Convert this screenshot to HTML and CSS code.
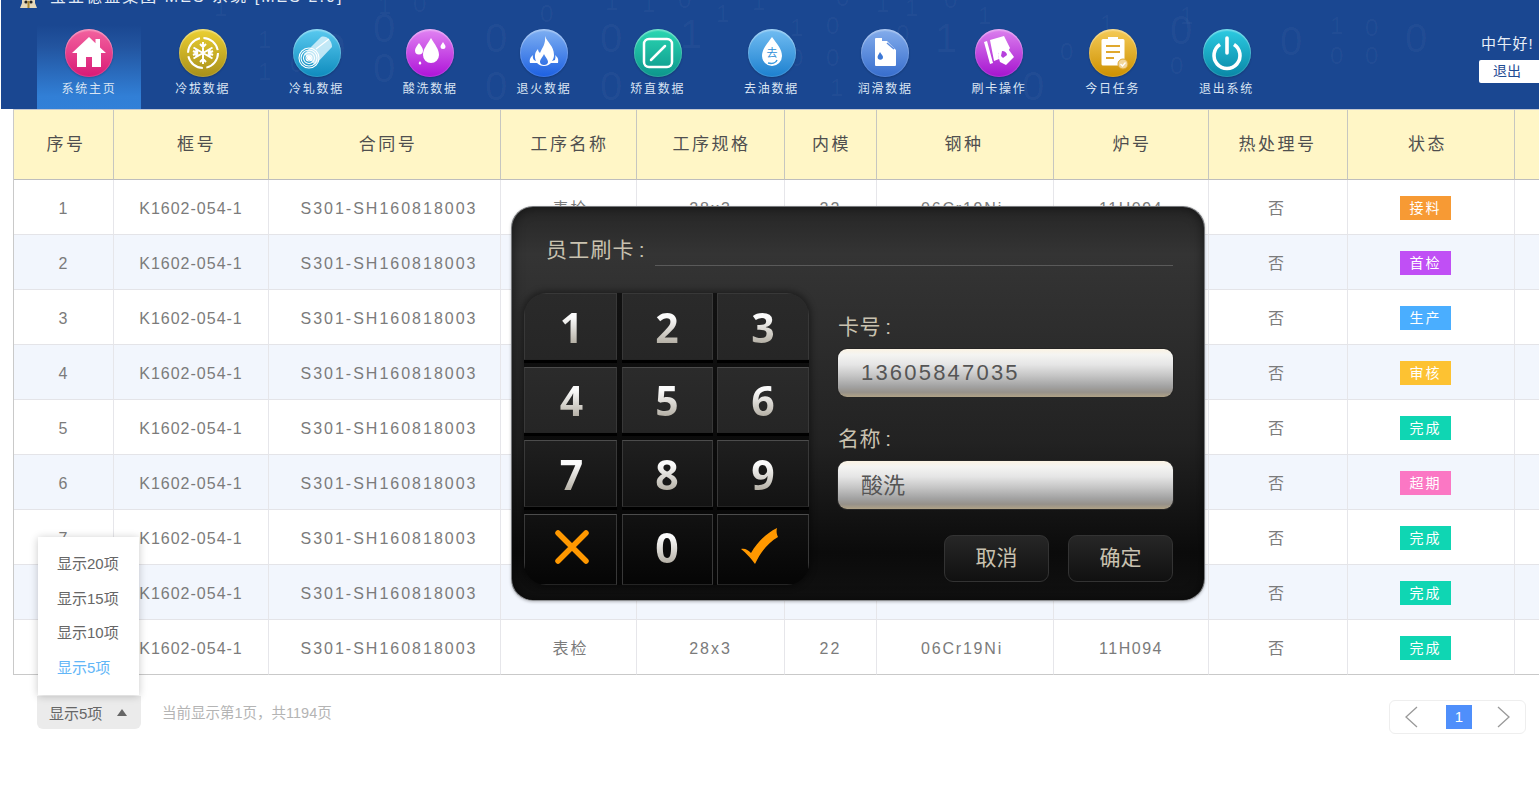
FILE: index.html
```html
<!DOCTYPE html>
<html lang="zh-CN">
<head>
<meta charset="utf-8">
<title>MES 系统</title>
<link rel="stylesheet" href="styles.css">
</head>
<body>
<div class="page">
  <header class="header">
    <svg class="binary" width="1539" height="109" aria-hidden="true">
      <g class="big">
        <text x="323" y="62">0</text><text x="373" y="42">0</text><text x="373" y="82">0</text><text x="485" y="100">0</text><text x="600" y="52">0</text><text x="600" y="100">0</text><text x="680" y="48">1</text><text x="935" y="52">1</text><text x="1022" y="100">0</text><text x="1170" y="44">0</text><text x="1280" y="55">0</text><text x="1405" y="52">0</text><text x="485" y="52">0</text>
      </g>
      <g class="mid">
        <text x="214" y="16">1</text><text x="258" y="48">1</text><text x="258" y="80">1</text><text x="290" y="72">0</text><text x="378" y="14">1</text><text x="413" y="12">0</text><text x="540" y="22">0</text><text x="605" y="10">1</text><text x="642" y="12">1</text><text x="678" y="8">0</text><text x="716" y="22">1</text><text x="752" y="10">1</text><text x="836" y="6">0</text><text x="876" y="12">1</text><text x="905" y="16">1</text><text x="944" y="8">0</text><text x="978" y="24">1</text><text x="790" y="36">1</text><text x="826" y="34">0</text><text x="790" y="66">0</text><text x="826" y="66">0</text><text x="830" y="96">1</text><text x="896" y="42">0</text><text x="1100" y="32">1</text><text x="1180" y="24">1</text><text x="1060" y="60">0</text><text x="1170" y="74">0</text><text x="1330" y="34">1</text><text x="1365" y="36">0</text><text x="1330" y="64">0</text><text x="1365" y="64">0</text>
      </g>
    </svg>
    <div class="titlebar">
      <svg class="logo" width="17" height="9" viewBox="0 0 17 9"><path d="M2 0h13v3l2 5H0l2-5z" fill="#e6d8b8"/><circle cx="6" cy="2" r="1.6" fill="#222"/><circle cx="11" cy="2" r="1.6" fill="#222"/><path d="M8.5 1v7" stroke="#a83" stroke-width="2"/></svg>
      <span class="apptitle">宝业德盛集团 MES 系统 [MES 2.0]</span>
    </div>
    <div class="navrow">
      <nav class="nav">
        <a class="navitem active"><span class="ico pink"><svg viewBox="0 0 48 48"><path d="M24 8 7 24h5v14h9V28h6v10h9V24h5l-6-5.6V10h-4.500v4.200z" fill="#fff"/></svg></span><span class="navlabel">系统主页</span></a>
        <a class="navitem"><span class="ico gold"><svg viewBox="0 0 48 48"><g fill="none" stroke="#fff"><circle cx="24" cy="24" r="15" stroke-width="2" stroke-dasharray="20 3.560"/><path d="M24 13v22M14.500 18.500l19 11M14.500 29.500l19-11M21 15l3 3 3-3M21 33l3-3 3 3M14 22l4 2-1-4M34 26l-4-2 1 4M17 28l1-4-4 2M31 20l-1 4 4-2" stroke-width="2"/></g></svg></span><span class="navlabel">冷拔数据</span></a>
        <a class="navitem"><span class="ico sky"><svg viewBox="0 0 48 48"><path d="M11 25 28 8c5-2 11 3 11 10L22 36z" fill="#d8f1fa" opacity=".85"/><g fill="none" stroke="#fff" stroke-width="1.100"><circle cx="16" cy="29" r="3"/><circle cx="16" cy="29" r="5.500"/><circle cx="16" cy="29" r="8"/><circle cx="16" cy="29" r="10"/><path d="M23 20 36 10"/></g><circle cx="16" cy="29" r="2.200" fill="#fff"/></svg></span><span class="navlabel">冷轧数据</span></a>
        <a class="navitem"><span class="ico violet"><svg viewBox="0 0 48 48"><path d="M25 9c4 7 8 11 8 17a8 8 0 0 1-16 0c0-6 4-10 8-17zM13 14c2 3 4 5 4 7.500a4 4 0 0 1-8 0c0-2.500 2-4.500 4-7.500zM37 13c1 2 2.500 3 2.500 4.500a2.500 2.500 0 0 1-5 0c0-1.500 1.500-2.500 2.500-4.500zM14 32c.6 1 1.300 1.500 1.300 2.300a1.300 1.300 0 0 1-2.600 0c0-.8.700-1.300 1.300-2.300z" fill="#fff"/></svg></span><span class="navlabel">酸洗数据</span></a>
        <a class="navitem"><span class="ico flame"><svg viewBox="0 0 48 48"><path d="M25 7c2 6 9 10 9 19 0 2-.5 4-2 6l3-1c0-1 1-3 0-5 2 2 4 3 3 8h-7c-2 2-4 3-7 3s-5-1-7-3H10c-1-4 1-6 3-8-.5 2 0 4 1 5l2 1c-2-5-1-9 2-12 0 2 1 3 2 4 2-5 6-9 5-17zm-1 18c-1 3-4 5-4 8 0 2 2 3 4 3s4-1 4-3c0-3-3-5-4-8z" fill="#fff" fill-rule="evenodd"/></svg></span><span class="navlabel">退火数据</span></a>
        <a class="navitem"><span class="ico teal"><svg viewBox="0 0 48 48"><rect x="10" y="10" width="28" height="28" rx="5" fill="none" stroke="#fff" stroke-width="2.500"/><path d="M17 31 31 17" stroke="#fff" stroke-width="2.500" stroke-linecap="round"/></svg></span><span class="navlabel">矫直数据</span></a>
        <a class="navitem"><span class="ico azure"><svg viewBox="0 0 48 48"><path d="M24 8c5 7 10 12 10 19a10 10 0 0 1-20 0c0-7 5-12 10-19z" fill="#fff"/><path d="M20 34c4 1 8 0 9-3" fill="none" stroke="#3a9be0" stroke-width="1.500"/><text x="24" y="28" class="quyou">去</text></svg></span><span class="navlabel">去油数据</span></a>
        <a class="navitem"><span class="ico steel"><svg viewBox="0 0 48 48"><path d="M15 9h6v3h5l9 9v15a1 1 0 0 1-1 1H15a1 1 0 0 1-1-1V10a1 1 0 0 1 1-1z" fill="#fff"/><path d="M26 14l7 6" stroke="#5a8ce0" stroke-width="1.500"/><path d="M19 23c1.500 2.500 3 3.500 3 5a2.700 2.700 0 0 1-5.400 0c0-1.500 1-2.500 2.400-5z" fill="#3d78d6"/></svg></span><span class="navlabel">润滑数据</span></a>
        <a class="navitem"><span class="ico orchid"><svg viewBox="0 0 48 48"><path d="M9 13l3-1 6 22-3 1z" fill="#fff"/><path d="M15 11l14-4 6 12-2 3-10 2 1 6-5 2z" fill="#fff"/><path d="M24 20l7-3 8 11-8 8-6-3-2-7z" fill="#fff"/><path d="M27 22c3 0 5 2 5 4l-4 3-2-2z" fill="#b640dc"/></svg></span><span class="navlabel">刷卡操作</span></a>
        <a class="navitem"><span class="ico amber"><svg viewBox="0 0 48 48"><path d="M14 10h5V8h10v2h5a1.500 1.500 0 0 1 1.500 1.500V35a1.500 1.500 0 0 1-1.500 1.500H14a1.500 1.500 0 0 1-1.500-1.500V11.500A1.500 1.500 0 0 1 14 10z" fill="#fff"/><path d="M17 17h14M17 23h14M17 29h8" stroke="#e0a82e" stroke-width="2"/><circle cx="34" cy="35" r="5" fill="#f2d69a" stroke="#e0a82e"/><path d="M31.500 35l2 2 3-3.500" fill="none" stroke="#fff" stroke-width="1.300"/></svg></span><span class="navlabel">今日任务</span></a>
        <a class="navitem"><span class="ico power"><svg viewBox="0 0 48 48"><path d="M17 15.500a13 13 0 1 0 14 0" fill="none" stroke="#fff" stroke-width="3.600"/><path d="M24 9v15" stroke="#fff" stroke-width="3.600" stroke-linecap="round"/></svg></span><span class="navlabel">退出系统</span></a>
      </nav>
      <div class="greet">
        <span class="greettext">中午好!</span>
        <a class="logout">退出</a>
      </div>
    </div>
  </header>

  <table class="grid">
    <colgroup>
      <col class="c1"><col class="c2"><col class="c3"><col class="c4"><col class="c5"><col class="c6"><col class="c7"><col class="c8"><col class="c9"><col class="c10"><col class="c11">
    </colgroup>
    <thead>
      <tr><th>序号</th><th>框号</th><th>合同号</th><th>工序名称</th><th>工序规格</th><th>内模</th><th>钢种</th><th>炉号</th><th>热处理号</th><th>状态</th><th></th></tr>
    </thead>
    <tbody>
      <tr><td>1</td><td>K1602-054-1</td><td>S301-SH160818003</td><td>表检</td><td>28x3</td><td>22</td><td>06Cr19Ni</td><td>11H094</td><td>否</td><td><span class="tag orange">接料</span></td><td></td></tr>
      <tr><td>2</td><td>K1602-054-1</td><td>S301-SH160818003</td><td>表检</td><td>28x3</td><td>22</td><td>06Cr19Ni</td><td>11H094</td><td>否</td><td><span class="tag purple">首检</span></td><td></td></tr>
      <tr><td>3</td><td>K1602-054-1</td><td>S301-SH160818003</td><td>表检</td><td>28x3</td><td>22</td><td>06Cr19Ni</td><td>11H094</td><td>否</td><td><span class="tag blue">生产</span></td><td></td></tr>
      <tr><td>4</td><td>K1602-054-1</td><td>S301-SH160818003</td><td>表检</td><td>28x3</td><td>22</td><td>06Cr19Ni</td><td>11H094</td><td>否</td><td><span class="tag yellow">审核</span></td><td></td></tr>
      <tr><td>5</td><td>K1602-054-1</td><td>S301-SH160818003</td><td>表检</td><td>28x3</td><td>22</td><td>06Cr19Ni</td><td>11H094</td><td>否</td><td><span class="tag green">完成</span></td><td></td></tr>
      <tr><td>6</td><td>K1602-054-1</td><td>S301-SH160818003</td><td>表检</td><td>28x3</td><td>22</td><td>06Cr19Ni</td><td>11H094</td><td>否</td><td><span class="tag rose">超期</span></td><td></td></tr>
      <tr><td>7</td><td>K1602-054-1</td><td>S301-SH160818003</td><td>表检</td><td>28x3</td><td>22</td><td>06Cr19Ni</td><td>11H094</td><td>否</td><td><span class="tag green">完成</span></td><td></td></tr>
      <tr><td>8</td><td>K1602-054-1</td><td>S301-SH160818003</td><td>表检</td><td>28x3</td><td>22</td><td>06Cr19Ni</td><td>11H094</td><td>否</td><td><span class="tag green">完成</span></td><td></td></tr>
      <tr><td>9</td><td>K1602-054-1</td><td>S301-SH160818003</td><td>表检</td><td>28x3</td><td>22</td><td>06Cr19Ni</td><td>11H094</td><td>否</td><td><span class="tag green">完成</span></td><td></td></tr>
    </tbody>
  </table>

  <footer class="footer">
    <div class="pagesize">
      <ul class="sizemenu">
        <li>显示20项</li>
        <li>显示15项</li>
        <li>显示10项</li>
        <li class="current">显示5项</li>
      </ul>
      <span>显示5项</span><i class="caret"></i>
    </div>
    <span class="pageinfo">当前显示第1页&#65292;共1194页</span>
    <div class="pager">
      <svg width="16" height="24" viewBox="0 0 16 24"><path d="M13 2 2 12l11 10" fill="none" stroke="#999" stroke-width="1.300"/></svg>
      <span class="pagenum">1</span>
      <svg width="16" height="24" viewBox="0 0 16 24"><path d="M3 2l11 10L3 22" fill="none" stroke="#999" stroke-width="1.300"/></svg>
    </div>
  </footer>

  <section class="dialog">
    <div class="dlghead"><span class="dlgtitle">员工刷卡<span class="colon">:</span></span><span class="dlgline"></span></div>
    <div class="dlgbody">
      <div class="keypad">
        <button class="key"><b>1</b></button><button class="key"><b>2</b></button><button class="key"><b>3</b></button>
        <button class="key"><b>4</b></button><button class="key"><b>5</b></button><button class="key"><b>6</b></button>
        <button class="key"><b>7</b></button><button class="key"><b>8</b></button><button class="key"><b>9</b></button>
        <button class="key"><svg width="38" height="36" viewBox="0 0 38 36"><path d="M5 4l28 28M33 4 5 32" stroke="#ff9800" stroke-width="5.500" stroke-linecap="round"/></svg></button>
        <button class="key"><b>0</b></button>
        <button class="key key-check"><svg width="38" height="38" viewBox="0 0 38 38"><path d="M1 22c4-1 7 1 10 4C17 16 25 7 37 1c-1 4 0 7 1 9-9 5-17 14-23 27-5-7-9-11-14-15z" fill="#ff9800"/></svg></button>
      </div>
      <div class="dlgform">
        <label class="fieldlabel">卡号<span class="colon">:</span></label>
        <div class="field num">13605847035</div>
        <label class="fieldlabel second">名称<span class="colon">:</span></label>
        <div class="field cjk">酸洗</div>
        <div class="dlgactions"><button class="dlgbtn">取消</button><button class="dlgbtn">确定</button></div>
      </div>
    </div>
  </section>
</div>
</body>
</html>
```

FILE: styles.css
```css
* { box-sizing: border-box; }
html, body { margin: 0; padding: 0; height: 100%; }
body {
  background: #fff;
  font-family: "Liberation Sans", "Noto Sans CJK SC", sans-serif;
  overflow: hidden;
}
.page { position: relative; width: 1539px; height: 804px; overflow: hidden; }

/* header */
.header {
  position: relative;
  height: 109px;
  margin-left: 1px;
  background: #1a4791;
  overflow: hidden;
}
.binary { position: absolute; left: -1px; top: 0; }
.binary text { font-family: "Liberation Sans", sans-serif; fill: rgba(255,255,255,.04); }
.binary .big text { font-size: 40px; }
.binary .mid text { font-size: 24px; }
.titlebar {
  position: relative;
  height: 5px;
  display: flex;
  align-items: flex-end;
  padding-left: 19px;
  color: #e4ebf5;
  font-size: 16px;
  line-height: 16px;
  white-space: nowrap;
}
.logo { flex: none; margin-bottom: -4px; }
.apptitle { margin-left: 13px; letter-spacing: 2.050px; }
.navrow { position: relative; display: flex; height: 104px; }
.nav { display: flex; gap: 9.750px; padding: 20px 0 0 36px; }
.navitem {
  width: 104px;
  height: 84px;
  display: flex;
  flex-direction: column;
  align-items: center;
  padding-top: 4px;
}
.navitem.active { background: linear-gradient(#1a4791 0%, #22549f 25%, #317fd6 85%, #3280d8 100%); }
.ico {
  width: 48px;
  height: 48px;
  border-radius: 50%;
  display: block;
  box-shadow: inset 0 2px 1px rgba(255,255,255,.25), inset 0 0 0 1px rgba(255,255,255,.12), 0 1px 2px rgba(0,0,0,.2);
}
.ico svg { display: block; width: 48px; height: 48px; }
.pink { background: linear-gradient(#f3639f, #d81a76); }
.gold { background: linear-gradient(#ecd033, #a78f1a); }
.sky { background: linear-gradient(#5acaf0, #0e8bbd); }
.violet { background: linear-gradient(#e184f2, #ae13d8); }
.flame { background: linear-gradient(#7fb0f2, #1c60e2); }
.teal { background: linear-gradient(#2bd7b2, #0d968c); }
.azure { background: linear-gradient(#72bdf2, #1c80cf); }
.steel { background: linear-gradient(#84adec, #366dcd); }
.orchid { background: linear-gradient(#dc80ee, #a514cf); }
.amber { background: linear-gradient(#f5cb58, #cd9000); }
.power { background: linear-gradient(#2ccbe2, #0987a6); }
.quyou { font-size: 11px; fill: #2f8fd8; text-anchor: middle; font-family: "Noto Sans CJK SC", sans-serif; }
.navlabel {
  margin-top: 3px;
  font-size: 12px;
  line-height: 18px;
  letter-spacing: 1.800px;
  color: #d9e4f3;
  white-space: nowrap;
}
.greet {
  margin-left: auto;
  width: 60px;
  flex: none;
  align-self: flex-end;
  padding-bottom: 26px;
  display: flex;
  flex-direction: column;
}
.greettext { font-size: 15px; line-height: 20px; color: #e8eef7; letter-spacing: .8px; padding-left: 2px; white-space: nowrap; margin-bottom: 6px; }
.logout {
  height: 23px;
  background: #fff;
  border-radius: 2px 0 0 2px;
  color: #1f4c94;
  font-size: 14px;
  line-height: 23px;
  padding-left: 14px;
}

/* table */
.grid {
  margin-left: 13px;
  width: 1526px;
  table-layout: fixed;
  border-collapse: separate;
  border-spacing: 0;
  border-left: 1px solid #c9c9c9;
}
.c1 { width: 100px; } .c2 { width: 155px; } .c3 { width: 232px; } .c4 { width: 136px; }
.c5 { width: 148px; } .c6 { width: 92px; } .c7 { width: 177px; } .c8 { width: 155px; }
.c9 { width: 139px; } .c10 { width: 167px; } .c11 { width: 25px; }
.grid th {
  height: 71px;
  background: #fff6c6;
  border-right: 1px solid #c6c6c0;
  border-top: 1px solid #c4c8cf;
  border-bottom: 1px solid #bdbdbd;
  font-size: 17px;
  font-weight: 400;
  letter-spacing: 2.500px;
  color: #4f4f4f;
  padding: 0 0 4px 2px;
}
.grid td {
  height: 55px;
  border-right: 1px solid #e6e6ea;
  border-bottom: 1px solid #e4e4e8;
  text-align: center;
  font-size: 16px;
  letter-spacing: 1px;
  color: #7b7b7b;
  padding: 3px 0 0;
}
.grid tbody tr:nth-child(even) td { background: #f2f6fd; }
.grid tbody tr:last-child td { border-bottom-color: #c9c9c9; }
.grid th:last-child, .grid td:last-child { border-right: 0; }
.grid th:nth-child(1) { padding-left: 5px; }
.grid th:nth-child(2) { padding-left: 11px; }
.grid th:nth-child(3) { padding-left: 7px; }
.grid th:nth-child(7) { padding-right: 4px; }
.grid th:nth-child(9) { padding-right: 3px; }
.grid th:nth-child(10) { padding-right: 9px; }
.grid td:nth-child(3) { padding-left: 9px; letter-spacing: 2px; }
.grid td:nth-child(4) { padding-top: 0; letter-spacing: 2px; padding-left: 4px; }
.grid td:nth-child(5), .grid td:nth-child(6) { letter-spacing: 2px; }
.grid td:nth-child(7) { padding-right: 6px; letter-spacing: 1.800px; }
.grid td:nth-child(8) { letter-spacing: 1.500px; }
.grid td:nth-child(9) { padding-top: 0; padding-right: 3px; }
.grid td:nth-child(10) { padding: 2px 11px 0 0; }
.tag {
  display: inline-block;
  width: 51px;
  height: 24px;
  font-size: 14px;
  line-height: 24px;
  letter-spacing: 2px;
  color: #fff;
  text-align: center;
  vertical-align: middle;
}
.orange { background: #f79a34; }
.purple { background: #c04ff5; }
.blue { background: #4aaeff; }
.yellow { background: #fdc232; }
.green { background: #0fd6b3; }
.rose { background: #fb77c4; }

/* footer */
.footer {
  display: flex;
  align-items: flex-start;
  padding: 21px 13px 0 37px;
}
.pagesize {
  position: relative;
  width: 104px;
  height: 33px;
  background: #ebebeb;
  border-radius: 0 0 6px 6px;
  display: flex;
  align-items: center;
  padding-left: 12px;
  font-size: 15px;
  color: #666;
}
.caret {
  width: 0;
  height: 0;
  margin-left: 15px;
  border-left: 5.500px solid transparent;
  border-right: 5.500px solid transparent;
  border-bottom: 7px solid #666;
}
.sizemenu {
  position: absolute;
  left: 1px;
  bottom: 34px;
  width: 101px;
  height: 158px;
  margin: 0;
  padding: 10px 0 0 19px;
  list-style: none;
  background: #fff;
  box-shadow: 0 1px 8px rgba(0,0,0,.22);
}
.sizemenu li { height: 34.700px; line-height: 34px; font-size: 15px; color: #666; white-space: nowrap; }
.sizemenu .current { color: #62b6f7; }
.pageinfo { margin: 7px 0 0 21px; font-size: 14.500px; line-height: 20px; color: #b4b4b4; }
.pager {
  margin: 4px 0 0 auto;
  width: 137px;
  height: 34px;
  border: 1px solid #eeeeee;
  border-radius: 6px;
  display: flex;
  align-items: center;
  padding: 0 14px;
  justify-content: space-between;
}
.pagenum {
  width: 26px;
  height: 24px;
  margin-left: 3px;
  background: #4f8ffb;
  color: #fff;
  font-size: 15px;
  line-height: 24px;
  text-align: center;
}

/* dialog */
.dialog {
  position: absolute;
  left: 511px;
  top: 206px;
  width: 694px;
  height: 395px;
  border-radius: 22px;
  border: 1px solid #77797c;
  border-bottom-color: #8d8f92;
  background: linear-gradient(#262626 0%, #343434 12%, #2e2e2e 30%, #222 60%, #0b0b0b 88%, #111 100%);
  box-shadow: inset 0 0 12px rgba(0,0,0,.55), 0 1px 3px rgba(0,0,0,.25);
  color: #c9c2b0;
  padding: 0 31px 0 12px;
}
.colon { margin-left: 4px; }
.dlghead { display: flex; align-items: flex-end; height: 59px; padding-left: 22px; }
.dlgtitle { font-size: 21px; line-height: 30px; letter-spacing: 1.200px; margin-bottom: 1px; white-space: nowrap; }
.dlgline { flex: 1; height: 1px; background: #5a5a5a; margin-left: 9px; }
.dlgbody { display: flex; margin-top: 27px; }
.keypad {
  width: 285px;
  height: 292px;
  flex: none;
  display: grid;
  grid-template-columns: 93px 91px 92px;
  grid-template-rows: 67px 66px 67px 71px;
  column-gap: 4.500px;
  row-gap: 7px;
  border-radius: 22px;
  overflow: hidden;
  background: linear-gradient(#111, #060606);
  box-shadow: 0 0 6px 2px rgba(0,0,0,.4);
}
.key {
  margin: 0;
  padding: 0;
  border: 1px solid #383838;
  border-bottom-color: #242424;
  background: linear-gradient(#2a2a2a, #262626);
  display: flex;
  align-items: center;
  justify-content: center;
  box-shadow: 0 3px 0 #000;
}
.key:nth-child(n+4) { background: linear-gradient(#2b2b2b, #252525); border-top-color: #4c4c4c; }
.key:nth-child(n+7) { background: linear-gradient(#1f1f1f, #131313); }
.key:nth-child(n+10) { background: linear-gradient(#121212, #050505); box-shadow: none; padding-bottom: 5px; }
.key:nth-child(3n+1) { padding-left: 2px; }
.key-check svg { margin: 0 8px 2px 0; }
.key b {
  font-family: "Open Sans", "Liberation Sans", sans-serif;
  font-size: 41px;
  line-height: 48px;
  font-weight: 700;
  background: linear-gradient(#fbfbfb 30%, #b3aea3 85%);
  -webkit-background-clip: text;
  background-clip: text;
  color: transparent;
}
.dlgform { width: 335px; margin-left: 29px; padding-top: 20px; }
.fieldlabel { display: block; font-size: 21px; line-height: 28px; letter-spacing: .6px; margin-bottom: 8px; }
.fieldlabel.second { margin-top: 28px; }
.field {
  height: 48px;
  border-radius: 9px;
  box-shadow: 0 0 0 1px #252525;
  background: linear-gradient(#fbf3e4 0%, #f4f4f2 12%, #e6e6e6 32%, #c6c6c6 55%, #a2a2a2 78%, #96918a 90%, #b0a286 100%);
  padding-left: 23px;
  font-size: 22px;
  line-height: 48px;
  color: #555;
}
.field.num { letter-spacing: 2.200px; }
.field.cjk { line-height: 50px; }
.dlgactions { display: flex; justify-content: flex-end; gap: 19px; margin-top: 26px; }
.dlgbtn {
  width: 105px;
  height: 47px;
  padding: 0 0 5px;
  border: 1px solid #333;
  border-radius: 9px;
  background: linear-gradient(#272727, #101010);
  color: #c9c2b0;
  font-family: "Noto Sans CJK SC", sans-serif;
  font-size: 21px;
}
```
